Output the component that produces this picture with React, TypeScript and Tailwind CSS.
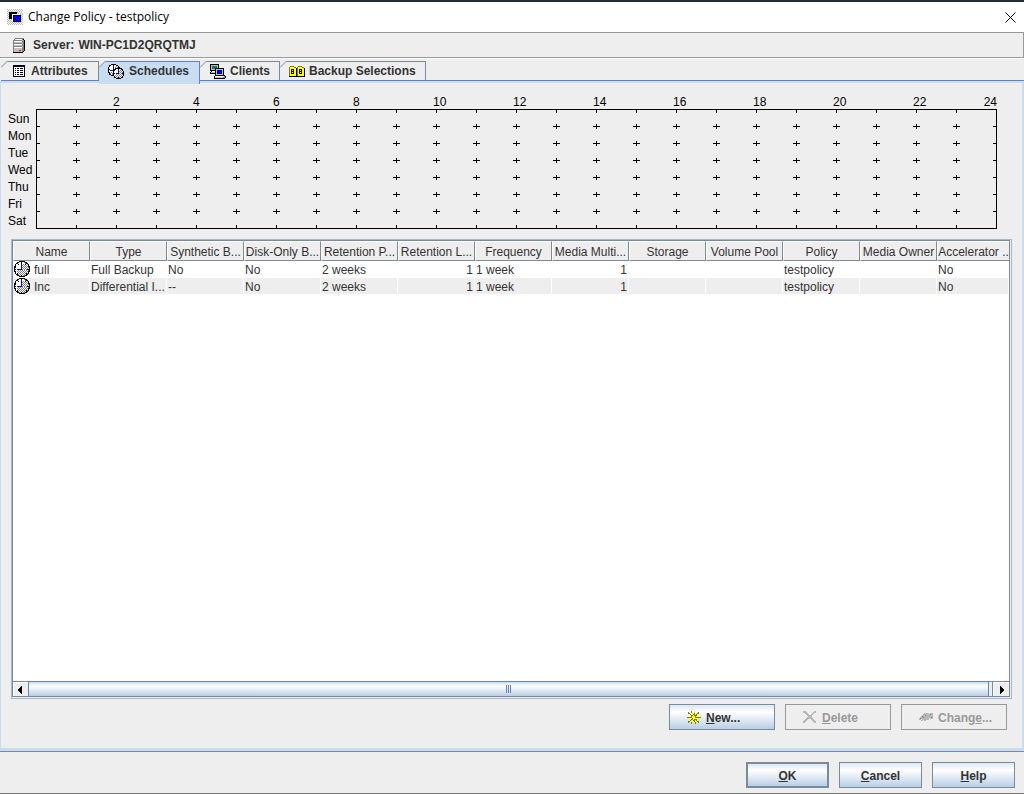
import type { ReactNode } from "react";

const DAYS = ["Sun", "Mon", "Tue", "Wed", "Thu", "Fri", "Sat"];
const HOURS = Array.from({ length: 23 }, (_, i) => i + 1);

const COLUMNS = [
  "Name",
  "Type",
  "Synthetic B...",
  "Disk-Only B...",
  "Retention P...",
  "Retention L...",
  "Frequency",
  "Media Multi...",
  "Storage",
  "Volume Pool",
  "Policy",
  "Media Owner",
  "Accelerator ..",
];

const ROWS = [
  ["full", "Full Backup", "No", "No", "2 weeks", "1", "1 week", "1", "", "", "testpolicy", "", "No"],
  ["Inc", "Differential I...", "--", "No", "2 weeks", "1", "1 week", "1", "", "", "testpolicy", "", "No"],
];

const NUMERIC = [5, 7];

const PALETTE: Record<string, string> = {
  k: "#000000",
  w: "#ffffff",
  g: "#c0c0c0",
  m: "#808080",
  d: "#808080",
  b: "#0000ff",
  n: "#000080",
  t: "#008080",
  y: "#ffff00",
  o: "#808000",
  r: "#ff0000",
  l: "#b8b8b8",
};

// Small bitmap icon, one character per pixel
function PixelIcon({ rows, className = "" }: { rows: string[]; className?: string }) {
  const width = rows[0].length;
  return (
    <svg
      width={width}
      height={rows.length}
      viewBox={`0 0 ${width} ${rows.length}`}
      shapeRendering="crispEdges"
      aria-hidden="true"
      className={`shrink-0 ${className}`}
    >
      {rows.flatMap((row, y) =>
        row.split("").map((c, x) =>
          PALETTE[c] ? <rect key={`${x}-${y}`} x={x} y={y} width="1" height="1" fill={PALETTE[c]} /> : null
        )
      )}
    </svg>
  );
}

const APP_ICON = [
  "l.l.l.l.l.l.l.l.",
  ".l.l.l.l.l.l.l.l",
  "l.l.l.l.l.l.l.l.",
  ".lkkkkkkkkl.l.l.",
  "l.kkkkkkkk.l.l.l",
  ".lkkkwwwwwwwwl.l",
  "l.kkkwkkkkkkkkl.",
  ".lkkkwkbbbbbbk.l",
  "l.kkkwkbbbbbbkl.",
  ".lkkkwkbbbbbbk.l",
  "l.l.lwkbbbbbbkl.",
  ".l.l.wkbbbbbbk.l",
  "l.l.lwkkkkkkkkl.",
  ".l.l.l.l.l.l.l.l",
  "l.l.l.l.l.l.l.l.",
  ".l.l.l.l.l.l.l.l",
];

const SERVER_ICON = [
  "..ddddddddd.",
  ".dwwwwwwwdk.",
  "dddddddddgdk",
  "dwwwwwwwwddk",
  "dggggggggddk",
  "dddddddddgdk",
  "dwwwwwwwwddk",
  "dggggggggddk",
  "dddddddddgdk",
  "dwwwwwwwwddk",
  "dggggggggddk",
  "dggggggggddk",
  "dgggggrrgddk",
  "dggggggggdk.",
  "kkkkkkkkkk..",
];

const LIST_ICON = [
  "kkkkkkkkkkkk",
  "knnnnnnnnnnk",
  "kwwwwwwwwwwk",
  "kwkwkkwkkkwk",
  "kwwwwwwwwwwk",
  "kwnwnnwnnnwk",
  "kwwwwwwwwwwk",
  "kwkwkkwkkkwk",
  "kwwwwwwwwwwk",
  "kwnwnnwnnnwk",
  "kwwwwwwwwwwk",
  "kkkkkkkkkkkk",
];

const COMPUTERS_ICON = [
  "kkkkkkkkk.......",
  "kgggggggk.......",
  "kgtttttgk.......",
  "kgtttttgk.......",
  "kgtttkkkkkkkkk..",
  "kggggkgggggggk..",
  "kkkkkkgnnnnngk..",
  ".kwwwkgnbbbngk..",
  "kggggkgnbbbngk..",
  "kkkkkkgnnnnngk..",
  ".....kgggggggk..",
  ".....kkkkkkkkkk.",
  "....kwwwwwwwwwdk",
  "....kggggggggddk",
  "....kkkkkkkkkkk.",
];

const FOLDERS_ICON = [
  ".oooo....oooo...",
  "oyyyyoo.oyyyyoo.",
  "oyyyyyykoyyyyyyk",
  "oykkkyykoykkkyyk",
  "oykykyykoykykyyk",
  "oykkkyykoykkkyyk",
  "oykykyykoykykyyk",
  "oykkkyykoykkkyyk",
  "oyyyyyykoyyyyyyk",
  "oyyyyyykoyyyyyyk",
  "kkkkkkkkkkkkkkkk",
];

const CLOCK_ICON = [
  ".....kkkkkk.....",
  "...kkwwkwwmkk...",
  "..kkwwwbwwwmkk..",
  ".kwwkwwbwmwkwmk.",
  ".kwwwwwbmwmwmwk.",
  "kkwwwwwbwmwmwmkk",
  "kkwwwwwbmwmwmwmk",
  "kwwwwwwbwmwmwmwk",
  "kkwbbbbbmwmwmkkk",
  "kwwwmwmwmwmwmwmk",
  "kkwmwmwmwmwmwmkk",
  ".kwwmwmwmwmwmwk.",
  ".kwkwmwmwmwmkmk.",
  "..kkmwmwmwmwkk..",
  "...kkmwkwmmkk...",
  ".....kkkkkk.....",
];

const CLOCKS_ICON = [
  "...kkkkk........",
  ".kkwwkwwkk......",
  ".kwwwbwwmwk.....",
  "kwwwwbwmwmkk....",
  "kwwwwbwkkkkkkk..",
  "kkwwwbkkwwkwwkk.",
  "kwbbbbkwwwbwmwk.",
  "kwwwwkwwwwbmwmwk",
  "kkwmwkwwwwbwmwmk",
  ".kmwmkkwbbbmwmkk",
  ".kkwmkwwmwmwmwmk",
  "...kkkwmwmwmwmwk",
  "......kwmwmwmwk.",
  "......kkwmkmwkk.",
  "........kkkkk...",
];

const SPARK_ICON = [
  "....o..y......",
  ".o..oy.y...o..",
  ".oo..y.o..oo..",
  "..yo.yoo.oy...",
  "...yooyoooy...",
  "....oyyyo.....",
  "oooooyyyoooooo",
  ".yyyyoyyyyyyy.",
  "...yooyoooy...",
  "..yo.yoo.oy...",
  ".oo..y.o..oo..",
  ".o..oy.yo..o..",
  "....o...o.....",
];

const CROSS_ICON = [
  "lll........ll.",
  "llll......lll.",
  "..lll....ll...",
  "...lll..ll....",
  "....lllll.....",
  ".....llll.....",
  "....lllll.....",
  "...lllllll....",
  "..lll...lll...",
  ".lll.....lll..",
  "lll.......lll.",
  "ll.........ll.",
];

const HAND_ICON = [
  ".....lllll.lll",
  "....lllllllmll",
  "...lllmlllllll",
  "..lmllllllllll",
  ".lllmlllllllml",
  "lmllllllll.lll",
  "ll.lllllll....",
  "..ll.ll.......",
];

function Tab({
  icon,
  label,
  selected = false,
  className,
}: {
  icon: ReactNode;
  label: string;
  selected?: boolean;
  className: string;
}) {
  return (
    <button
      type="button"
      role="tab"
      aria-selected={selected}
      className={`relative flex items-center border-t border-r font-bold ${
        selected
          ? "h-[23px] border-[#6382bf] bg-[#c8ddf2] pb-1"
          : "h-5 border-b border-[#7a8a99] border-b-[#6382bf] bg-[#eeeeee]"
      } ${className}`}
    >
      <svg width="7" height="7" viewBox="0 0 7 7" className="absolute -top-px left-0" aria-hidden="true">
        <path d="M0 0H7L0 7Z" fill="#eeeeee" />
        <path d="M0 6.5L6.5 0" stroke={selected ? "#6382bf" : "#7a8a99"} fill="none" />
      </svg>
      {icon}
      <span>{label}</span>
    </button>
  );
}

function WeekGrid() {
  return (
    <div className="flex pt-[26px] pr-[26px] pl-[7px]">
      <ul className="w-7 pt-[2px]">
        {DAYS.map((day) => (
          <li key={day} className="h-[17px] leading-[17px]">
            {day}
          </li>
        ))}
      </ul>
      <svg
        className="h-[120px] flex-1 overflow-visible"
        shapeRendering="crispEdges"
        fontSize="12"
        role="img"
        aria-label="Weekly schedule"
      >
        <rect x="0.5" y="0.5" width="100%" height="119" fill="none" stroke="black" />
        {HOURS.map((h) => (
          <svg key={h} x={`${(h / 24) * 100}%`} overflow="visible">
            <path d="M0.5 1v3M0.5 116v3" stroke="black" />
            {DAYS.slice(1).map((day, i) => (
              <path key={day} d={`M-3 ${i * 17 + 17.5}h7M0.5 ${i * 17 + 15}v5`} stroke="black" />
            ))}
            {h % 2 === 0 && (
              <text x="-3" y="-3">
                {h}
              </text>
            )}
          </svg>
        ))}
        {DAYS.slice(1).map((day, i) => (
          <path key={day} d={`M1 ${i * 17 + 17.5}h3`} stroke="black" />
        ))}
        <svg x="100%" overflow="visible">
          {DAYS.slice(1).map((day, i) => (
            <path key={day} d={`M-3 ${i * 17 + 17.5}h3`} stroke="black" />
          ))}
          <text x="1" y="-3" textAnchor="end">
            24
          </text>
        </svg>
      </svg>
    </div>
  );
}

function ScheduleTable() {
  return (
    <table className="w-full table-fixed border-collapse text-[#333333]">
      <colgroup>
        {COLUMNS.map((name, i) => (
          <col key={name} className={i < COLUMNS.length - 1 ? "w-[77px]" : ""} />
        ))}
      </colgroup>
      <thead>
        <tr>
          {COLUMNS.map((name) => (
            <th key={name} scope="col" className="group p-0 font-normal">
              <div className="h-5 overflow-hidden border border-[#7a8a99] border-t-white border-l-white bg-[#eeeeee] leading-5 whitespace-nowrap group-last:border-r-0">
                {name}
              </div>
            </th>
          ))}
        </tr>
      </thead>
      <tbody>
        {ROWS.map((row, r) => (
          <tr key={row[0]}>
            {row.map((cell, c) => (
              <td key={COLUMNS[c]} className="p-0">
                <div
                  className={`flex h-[17px] items-center border-r border-b border-white px-px leading-4 whitespace-nowrap ${
                    r % 2 === 1 ? "bg-[#eeeeee]" : "bg-white"
                  } ${NUMERIC.includes(c) ? "justify-end" : ""}`}
                >
                  {c === 0 && <PixelIcon rows={CLOCK_ICON} className="mr-1" />}
                  <span className="pt-[2px]">{cell}</span>
                </div>
              </td>
            ))}
          </tr>
        ))}
      </tbody>
    </table>
  );
}

function ScrollBar() {
  return (
    <div className="flex h-[15px] border-t border-[#7a8a99] bg-[#eeeeee]">
      <button
        type="button"
        aria-label="Scroll left"
        className="flex w-[15px] items-center justify-center border-t border-l border-white pr-[2px]"
      >
        <PixelIcon rows={["...k", "..kk", ".kkk", "kkkk", "kkkk", ".kkk", "..kk", "...k"]} />
      </button>
      <div className="-mt-px flex flex-1 items-center justify-center border border-b-0 border-[#6382bf] bg-linear-to-b from-[#c8ddf2] via-white via-30% to-[#b8cfe5]">
        <div className="flex gap-px">
          <span className="h-2 w-px bg-[#6382bf]" />
          <span className="h-2 w-px bg-[#6382bf]" />
          <span className="h-2 w-px bg-[#6382bf]" />
        </div>
      </div>
      <div className="w-1 border-r border-[#7a8a99]" />
      <button
        type="button"
        aria-label="Scroll right"
        className="flex w-4 items-center justify-center border-t border-l border-white"
      >
        <PixelIcon rows={["k...", "kk..", "kkk.", "kkkk", "kkkk", "kkk.", "kk..", "k..."]} />
      </button>
    </div>
  );
}

const metal = "border-[#7a8a99] bg-linear-to-b from-[#dde8f3] via-white via-30% to-[#b8cfe5] text-[#333333]";

function ActionButton({ icon, children, disabled = false }: { icon: string[]; children: ReactNode; disabled?: boolean }) {
  return (
    <button
      type="button"
      disabled={disabled}
      className={`flex h-[26px] w-[106px] items-center border pl-4 font-bold ${
        disabled ? "border-[#999999] bg-[#eeeeee] text-[#999999]" : metal
      }`}
    >
      <span className="flex w-5 pl-px">
        <PixelIcon rows={icon} />
      </span>
      <span className="pt-[2px]">{children}</span>
    </button>
  );
}

export default function App() {
  return (
    <div className="flex min-h-screen flex-col border-t-2 border-b border-t-[#222d38] border-b-[#777777] bg-[#eeeeee] font-['Liberation_Sans',Arial,sans-serif] text-[12px] leading-4 text-black">
      <header className="flex h-[30px] items-center bg-white pr-2 pl-[7px]">
        <PixelIcon rows={APP_ICON} />
        <h1 className="ml-[5px] flex-1 font-['Open_Sans','Segoe_UI',sans-serif]">Change Policy - testpolicy</h1>
        <button type="button" aria-label="Close">
          <svg width="11" height="11" viewBox="0 0 11 11" stroke="black" aria-hidden="true">
            <path d="M0.5 0.5l10 10M10.5 0.5l-10 10" />
          </svg>
        </button>
      </header>

      <div className="flex h-[26px] items-center border border-l-0 border-[#999999] pl-[13px] font-bold text-[#333333]">
        <PixelIcon rows={SERVER_ICON} />
        <span className="ml-2">Server:</span>
        <span className="ml-1">WIN-PC1D2QRQTMJ</span>
      </div>

      <div role="tablist" className="flex h-[23px] items-start border-t border-white pl-px pt-[2px] text-[#333333]">
        <Tab icon={<PixelIcon rows={LIST_ICON} />} label="Attributes" className="w-[98px] gap-[6px] pl-3" />
        <Tab icon={<PixelIcon rows={CLOCKS_ICON} />} label="Schedules" selected className="w-[101px] gap-[5px] pl-[9px]" />
        <Tab icon={<PixelIcon rows={COMPUTERS_ICON} />} label="Clients" className="w-20 gap-1 pl-[10px]" />
        <Tab icon={<PixelIcon rows={FOLDERS_ICON} />} label="Backup Selections" className="w-[146px] gap-1 pl-[9px]" />
        <div className="h-5 flex-1 border-b border-[#6382bf]" />
      </div>

      <main className="flex flex-1 flex-col border-t-2 border-r-2 border-b-[3px] border-l border-[#c8ddf2]">
        <WeekGrid />
        <section className="mt-[9px] mr-[10px] ml-[10px] flex flex-1 flex-col border border-[#a3b8cc]">
          <div className="mr-px mb-px flex flex-1 flex-col border border-[#7a8a99]">
            <div className="flex-1 bg-white">
              <ScheduleTable />
            </div>
            <ScrollBar />
          </div>
        </section>
        <div className="flex justify-end gap-[10px] pt-[5px] pr-[15px] pb-[18px]">
          <ActionButton icon={SPARK_ICON}>
            <u>N</u>ew...
          </ActionButton>
          <ActionButton icon={CROSS_ICON} disabled>
            <u>D</u>elete
          </ActionButton>
          <ActionButton icon={HAND_ICON} disabled>
            Chang<u>e</u>...
          </ActionButton>
        </div>
      </main>

      <footer className="flex justify-end gap-[10px] border-t border-[#7a8a99] pt-[10px] pr-[9px] pb-[5px]">
        <button type="button" className={`h-[26px] w-[83px] border-2 pt-[2px] font-bold ${metal}`}>
          <u>O</u>K
        </button>
        <button type="button" className={`h-[26px] w-[83px] border pt-[2px] font-bold ${metal}`}>
          <u>C</u>ancel
        </button>
        <button type="button" className={`h-[26px] w-[83px] border pt-[2px] font-bold ${metal}`}>
          <u>H</u>elp
        </button>
      </footer>
    </div>
  );
}
